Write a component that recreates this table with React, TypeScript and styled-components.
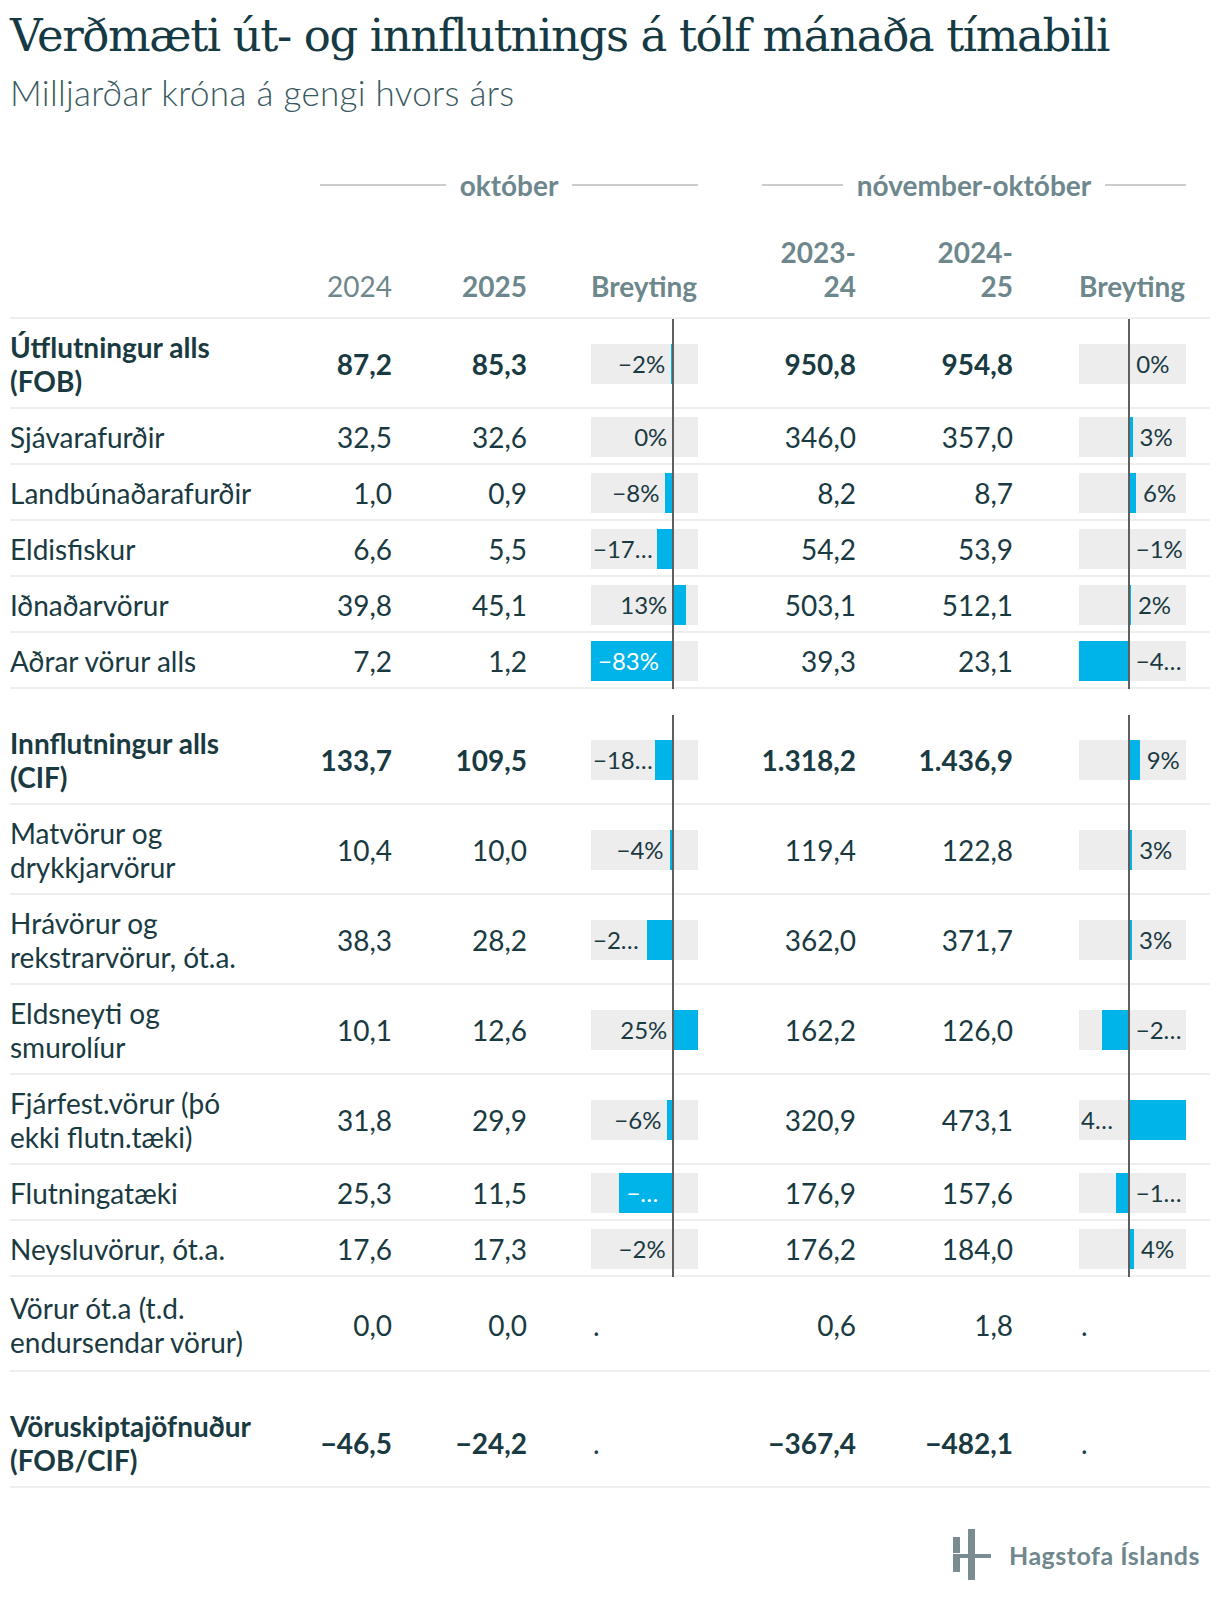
import React from 'react';
import styled, { createGlobalStyle } from 'styled-components';

// Grunnstillingar síðunnar
const GlobalStyle = createGlobalStyle`
  html, body {
    margin: 0;
    padding: 0;
    background: #ffffff;
  }
  body {
    font-family: Lato, "Noto Sans", sans-serif;
    color: #1a3a42;
  }
`;

const COLS = '282px 100px 135px 171px 158px 157px 173px 24px';
const TRACK_W = 107;

const Page = styled.div`
  width: 1200px;
  padding: 0 10px 25px;
`;

const Title = styled.h1`
  margin: 0;
  padding-top: 10px;
  font-family: "DejaVu Serif", "Liberation Serif", serif;
  font-weight: 400;
  font-size: 45px;
  line-height: 52px;
  letter-spacing: -1.4px;
  color: #163a43;
  white-space: nowrap;
`;

const Subtitle = styled.p`
  margin: 10px 0 0;
  font-family: Lato, sans-serif;
  font-weight: 300;
  font-size: 35px;
  line-height: 40px;
  letter-spacing: 0.3px;
  color: #3a5a61;
`;

const Table = styled.div`
  margin-top: 56px;
`;

const GridRow = styled.div`
  display: grid;
  grid-template-columns: ${COLS};
`;

// Yfirfyrirsagnir með línum á báða vegu
const GroupHead = styled.div<{ $start: number; $indent: number }>`
  grid-column: ${(p) => p.$start} / span 3;
  margin-left: ${(p) => p.$indent}px;
  display: flex;
  align-items: center;
  gap: 14px;
  font-weight: 700;
  font-size: 28px;
  line-height: 34px;
  color: #6d878d;

  &::before,
  &::after {
    content: '';
    flex: 1;
    height: 2px;
    background: #cccccc;
  }
`;

const HeadRow = styled(GridRow)`
  margin-top: 33px;
  align-items: end;
  padding-bottom: 14px;
  border-bottom: 2px solid #eeeeee;
`;

const HeadCell = styled.div<{ $bold?: boolean; $bar?: boolean }>`
  font-size: 28px;
  line-height: 34px;
  font-weight: ${(p) => (p.$bold ? 700 : 400)};
  color: #6d878d;
  white-space: pre-line;
  text-align: ${(p) => (p.$bar ? 'left' : 'right')};
  justify-self: end;
  width: ${(p) => (p.$bar ? `${TRACK_W}px` : 'auto')};
`;

const Row = styled(GridRow)<{ $tall?: boolean }>`
  align-items: center;
  padding: ${(p) => (p.$tall ? '14px 0 11px' : '11px 0 9px')};
  border-bottom: 2px solid #eeeeee;
`;

const Spacer = styled.div`
  height: 26px;
`;

const Label = styled.div<{ $bold?: boolean }>`
  font-size: 28px;
  line-height: 34px;
  font-weight: ${(p) => (p.$bold ? 700 : 400)};
  white-space: pre-line;
`;

const Num = styled.div<{ $bold?: boolean }>`
  font-size: 28px;
  line-height: 34px;
  font-weight: ${(p) => (p.$bold ? 700 : 400)};
  text-align: right;
`;

const BarCell = styled.div`
  position: relative;
  align-self: stretch;
  margin: -11px 0 -11px;
  display: flex;
  align-items: center;
  justify-content: flex-end;
`;

const Track = styled.div`
  position: relative;
  width: ${TRACK_W}px;
  height: 40px;
  background: #ededed;
`;

const Bar = styled.div`
  position: absolute;
  top: 0;
  bottom: 0;
  background: #00b4ea;
`;

const Axis = styled.div`
  position: absolute;
  top: 0;
  bottom: 0;
  width: 2px;
  background: #5f5f5f;
  z-index: 2;
`;

const BarLabel = styled.span<{ $inside?: boolean }>`
  position: absolute;
  top: 0;
  font-size: 24px;
  line-height: 40px;
  white-space: nowrap;
  color: ${(p) => (p.$inside ? '#ffffff' : '#1a3a42')};
  z-index: 3;
`;

const Dot = styled.div`
  justify-self: end;
  width: ${TRACK_W}px;
  font-size: 28px;
  line-height: 34px;
  padding-left: 2px;
  box-sizing: border-box;
`;

const Footer = styled.div`
  display: flex;
  justify-content: flex-end;
  align-items: center;
  gap: 18px;
  margin-top: 41px;
  padding-right: 10px;
`;

const Brand = styled.span`
  font-family: Lato, sans-serif;
  font-weight: 700;
  font-size: 25px;
  color: #6f878d;
  letter-spacing: 0.5px;
`;

type Change = { v: number; label: string; pos: 'L' | 'R' | 'F' | 'I' };

type Line = {
  name: string;
  bold?: boolean;
  tall?: boolean;
  gapBefore?: boolean;
  vals: [string, string, string, string];
  b1?: Change;
  b2?: Change;
};

const DOMAIN1: [number, number] = [-83.3, 25];
const DOMAIN2: [number, number] = [-41.2, 47.4];

const rows: Line[] = [
  { name: 'Útflutningur alls\n(FOB)', bold: true, vals: ['87,2', '85,3', '950,8', '954,8'], b1: { v: -2.2, label: '−2%', pos: 'L' }, b2: { v: 0.4, label: '0%', pos: 'R' } },
  { name: 'Sjávarafurðir', vals: ['32,5', '32,6', '346,0', '357,0'], b1: { v: 0.3, label: '0%', pos: 'L' }, b2: { v: 3.2, label: '3%', pos: 'R' } },
  { name: 'Landbúnaðarafurðir', vals: ['1,0', '0,9', '8,2', '8,7'], b1: { v: -8, label: '−8%', pos: 'L' }, b2: { v: 6.1, label: '6%', pos: 'R' } },
  { name: 'Eldisfiskur', vals: ['6,6', '5,5', '54,2', '53,9'], b1: { v: -16.7, label: '−17…', pos: 'F' }, b2: { v: -0.55, label: '−1%', pos: 'R' } },
  { name: 'Iðnaðarvörur', vals: ['39,8', '45,1', '503,1', '512,1'], b1: { v: 13.3, label: '13%', pos: 'L' }, b2: { v: 1.8, label: '2%', pos: 'R' } },
  { name: 'Aðrar vörur alls', vals: ['7,2', '1,2', '39,3', '23,1'], b1: { v: -83.3, label: '−83%', pos: 'I' }, b2: { v: -41.2, label: '−4…', pos: 'R' } },
  { name: 'Innflutningur alls\n(CIF)', bold: true, gapBefore: true, vals: ['133,7', '109,5', '1.318,2', '1.436,9'], b1: { v: -18.1, label: '−18…', pos: 'F' }, b2: { v: 9.0, label: '9%', pos: 'R' } },
  { name: 'Matvörur og\ndrykkjarvörur', vals: ['10,4', '10,0', '119,4', '122,8'], b1: { v: -3.8, label: '−4%', pos: 'L' }, b2: { v: 2.8, label: '3%', pos: 'R' } },
  { name: 'Hrávörur og\nrekstrarvörur, ót.a.', vals: ['38,3', '28,2', '362,0', '371,7'], b1: { v: -26.4, label: '−2…', pos: 'F' }, b2: { v: 2.7, label: '3%', pos: 'R' } },
  { name: 'Eldsneyti og\nsmurolíur', vals: ['10,1', '12,6', '162,2', '126,0'], b1: { v: 24.8, label: '25%', pos: 'L' }, b2: { v: -22.3, label: '−2…', pos: 'R' } },
  { name: 'Fjárfest.vörur (þó\nekki flutn.tæki)', vals: ['31,8', '29,9', '320,9', '473,1'], b1: { v: -6.0, label: '−6%', pos: 'L' }, b2: { v: 47.4, label: '4…', pos: 'F' } },
  { name: 'Flutningatæki', vals: ['25,3', '11,5', '176,9', '157,6'], b1: { v: -54.5, label: '−…', pos: 'I' }, b2: { v: -10.9, label: '−1…', pos: 'R' } },
  { name: 'Neysluvörur, ót.a.', vals: ['17,6', '17,3', '176,2', '184,0'], b1: { v: -1.7, label: '−2%', pos: 'L' }, b2: { v: 4.4, label: '4%', pos: 'R' } },
  { name: 'Vörur ót.a (t.d.\nendursendar vörur)', tall: true, vals: ['0,0', '0,0', '0,6', '1,8'] },
  { name: 'Vöruskiptajöfnuður\n(FOB/CIF)', bold: true, gapBefore: true, vals: ['−46,5', '−24,2', '−367,4', '−482,1'] },
];

// Ein súla með ás, grunni og merkingu
const ChangeBar: React.FC<{ c: Change; domain: [number, number] }> = ({ c, domain }) => {
  const [min, max] = domain;
  const scale = TRACK_W / (max - min);
  const axisX = -min * scale;
  const end = axisX + c.v * scale;
  const left = Math.min(axisX, end);
  const right = Math.max(axisX, end);

  let labelStyle: React.CSSProperties = {};
  if (c.pos === 'L') labelStyle = { right: TRACK_W - (left - 6) };
  if (c.pos === 'R') labelStyle = { left: right + 7 };
  if (c.pos === 'F') labelStyle = { left: 2 };
  if (c.pos === 'I') labelStyle = { left: left + 7 };

  return (
    <BarCell>
      <Track>
        <Bar style={{ left, width: right - left }} />
        <BarLabel $inside={c.pos === 'I'} style={labelStyle}>
          {c.label}
        </BarLabel>
      </Track>
      <Axis style={{ right: TRACK_W - axisX - 1 }} />
    </BarCell>
  );
};

const LogoMark: React.FC = () => (
  <svg width="38" height="52" viewBox="0 0 38 52" aria-hidden="true">
    <g fill="#7a8c91">
      <rect x="0" y="8" width="7" height="16" />
      <rect x="0" y="29" width="7" height="14" />
      <rect x="15" y="0" width="7" height="51" />
      <rect x="0" y="25" width="38" height="4" />
    </g>
  </svg>
);

const App: React.FC = () => (
  <Page>
    <GlobalStyle />
    <Title>Verðmæti út- og innflutnings á tólf mánaða tímabili</Title>
    <Subtitle>Milljarðar króna á gengi hvors árs</Subtitle>

    <Table>
      <GridRow>
        <GroupHead $start={2} $indent={28}>október</GroupHead>
        <GroupHead $start={5} $indent={64}>nóvember-október</GroupHead>
      </GridRow>

      <HeadRow>
        <div />
        <HeadCell>2024</HeadCell>
        <HeadCell $bold>2025</HeadCell>
        <HeadCell $bold $bar>Breyting</HeadCell>
        <HeadCell $bold>{'2023-\n24'}</HeadCell>
        <HeadCell $bold>{'2024-\n25'}</HeadCell>
        <HeadCell $bold $bar>Breyting</HeadCell>
        <div />
      </HeadRow>

      {rows.map((r) => (
        <React.Fragment key={r.name}>
          {r.gapBefore && <Spacer />}
          <Row $tall={r.tall}>
            <Label $bold={r.bold}>{r.name}</Label>
            <Num $bold={r.bold}>{r.vals[0]}</Num>
            <Num $bold={r.bold}>{r.vals[1]}</Num>
            {r.b1 ? <ChangeBar c={r.b1} domain={DOMAIN1} /> : <Dot>.</Dot>}
            <Num $bold={r.bold}>{r.vals[2]}</Num>
            <Num $bold={r.bold}>{r.vals[3]}</Num>
            {r.b2 ? <ChangeBar c={r.b2} domain={DOMAIN2} /> : <Dot>.</Dot>}
            <div />
          </Row>
        </React.Fragment>
      ))}
    </Table>

    <Footer>
      <LogoMark />
      <Brand>Hagstofa Íslands</Brand>
    </Footer>
  </Page>
);

export default App;
